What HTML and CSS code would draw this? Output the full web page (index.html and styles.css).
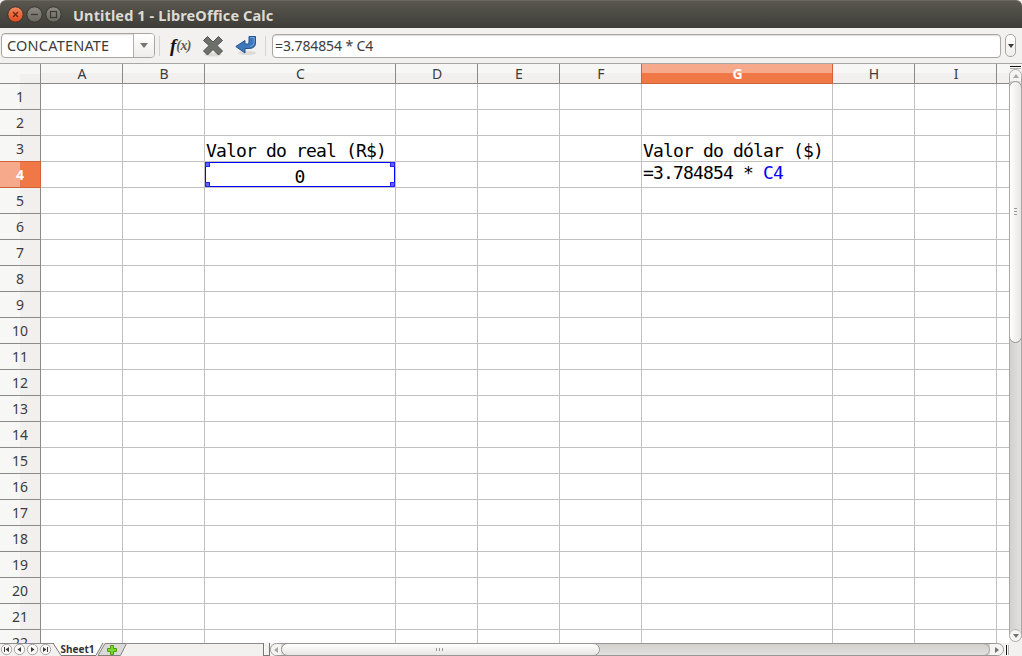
FILE: index.html
```html
<!DOCTYPE html>
<html lang="en">
<head>
<meta charset="utf-8">
<title>Untitled 1 - LibreOffice Calc</title>
<link rel="stylesheet" href="styles.css">
</head>
<body>
<div class="window">
  <header class="titlebar">
    <svg class="winbtns" width="60" height="28" viewBox="0 0 60 28">
      <defs><linearGradient id="o" x2="0" y2="1"><stop offset="0" stop-color="#f58860"/><stop offset="1" stop-color="#df4a1a"/></linearGradient>
      <linearGradient id="g" x2="0" y2="1"><stop offset="0" stop-color="#8d8b83"/><stop offset="1" stop-color="#67655e"/></linearGradient></defs>
      <g stroke="#34332e"><circle cx="10.500" cy="14.500" r="7.700" fill="url(#o)"/><circle cx="29.500" cy="14.500" r="7.700" fill="url(#g)"/><circle cx="48.500" cy="14.500" r="7.700" fill="url(#g)"/></g>
      <g fill="none" stroke="#3b3933" stroke-width="1.200"><path d="M8 12l5 5M13 12l-5 5" stroke="#6b210b"/><path d="M26 14.500h7"/><rect x="45.500" y="11.500" width="6" height="6"/></g>
    </svg>
    <span class="title">Untitled 1 - LibreOffice Calc</span>
  </header>
  <div class="toolbar">
    <div class="namebox"><span class="name">CONCATENATE</span><span class="drop"><svg width="8" height="5"><path d="M0 0h8L4 5z" fill="#77756f"/></svg></span></div>
    <i class="sep"></i>
    <div class="fx"><b>f</b><span>(x)</span></div>
    <svg class="cancel" width="22" height="22" viewBox="0 0 22 22"><ellipse cx="11" cy="19.500" rx="9" ry="2" fill="#dddbd8"/><path d="M5.500 1.500L11 7l5.500-5.500 4 4L15 10.500l5.500 5.500-4 4L11 14.500 5.500 20l-4-4L7 10.500 1.500 5.500z" fill="#6d6f6b" stroke="#50524e" stroke-linejoin="round"/></svg>
    <svg class="accept" width="22" height="22" viewBox="0 0 22 22"><ellipse cx="12" cy="18" rx="9" ry="2" fill="#dddbd8"/><path d="M14 1.500h6.500V8q0 5-6 5.500H10V18L.8 11.500 10 5.500V9h2.500q1.500 0 1.500-2z" fill="#3f77bb" stroke="#24528e" stroke-linejoin="round"/><path d="M15.200 2.500h4v5q0 3-4 4" fill="none" stroke="#7ba6d8"/></svg>
    <i class="sep sep2"></i>
    <div class="formula">=3.784854 * C4</div>
    <div class="expand"><svg width="6" height="4"><path d="M0 0h6L3 4z" fill="#3c3b37"/></svg></div>
  </div>
  <main class="main">
    <div class="sheet" id="sheet"></div>
    <div class="vscroll">
      <div class="split"></div>
      <div class="vtrack">
        <div class="vend"><svg width="6" height="4"><path d="M0 4h6L3 0z" fill="#aaa8a5"/></svg></div>
        <div class="vthumb"><i></i><i></i><i></i></div>
        <div class="vend vdown"><svg width="6" height="4"><path d="M0 0h6L3 4z" fill="#74726e"/></svg></div>
      </div>
    </div>
  </main>
  <footer class="bottom">
    <svg class="tabs" width="264" height="13" viewBox="0 0 264 13">
      <path d="M0 .5h54M127 .5h137" stroke="#8e8c89"/>
      <path d="M53 0L61 12.500H95L102 0z" fill="#fff"/>
      <path d="M53 0l8 12.500H96L103 0" fill="none" stroke="#777"/>
      <path d="M105 .5h21.500l-6 12H98z" fill="#dcdad7" stroke="#858381"/>
      <g fill="#faf9f8" stroke="#aaa8a5"><circle cx="6.500" cy="6.500" r="5.200"/><circle cx="19.500" cy="6.500" r="5.200"/><circle cx="32.500" cy="6.500" r="5.200"/><circle cx="45.500" cy="6.500" r="5.200"/></g>
      <g fill="#3c3b37"><path d="M4 4h1v5H4zM9 4v5L5.500 6.500zM21 4v5l-3.500-2.500zM31 4v5l3.500-2.500zM43 4v5l3.500-2.500zM47 4h1v5h-1z"/></g>
      <path d="M110.500 2.500h3v3h3v3h-3v3h-3v-3h-3v-3h3z" fill="#78d82c" stroke="#4a9e0c"/>
      <text class="tabtext" x="60.500" y="10" textLength="34" lengthAdjust="spacingAndGlyphs">Sheet1</text>
    </svg>
    <div class="hsplit"></div>
    <div class="htrack">
      <div class="hend"><svg width="4" height="6"><path d="M4 0v6L0 3z" fill="#aaa8a5"/></svg></div>
      <div class="hthumb"><i></i><i></i><i></i></div>
      <div class="hspace"></div>
      <div class="hend hright"><svg width="4" height="6"><path d="M0 0v6l4-3z" fill="#74726e"/></svg></div>
    </div>
    <div class="hmark"></div>
  </footer>
</div>
<script src="sheet.js"></script>
</body>
</html>
```
FILE: sheet.js
```js
const columns = ["A", "B", "C", "D", "E", "F", "G", "H", "I", ""];
const content = {
  C3: "Valor do real (R$)",
  C4: '<span class="ref"><i></i><i></i><i></i><i></i>0</span>',
  G3: "Valor do dólar ($)",
  G4: '<span class="edit">=3.784854 * <em>C4</em></span>'
};
let html = '<div class="corner"></div>';
for (const c of columns) html += `<div class="colhead${c === "G" ? " active" : ""}">${c}</div>`;
for (let r = 1; r <= 22; r++) {
  html += `<div class="rowhead${r === 4 ? " active" : ""}">${r}</div>`;
  for (const c of columns) html += `<div class="cell">${content[c + r] || ""}</div>`;
}
document.getElementById("sheet").innerHTML = html;
```
FILE: styles.css
```css
* { box-sizing: border-box; }
body { margin: 0; background: #f2f1f0; }
.window { width: 1022px; height: 656px; display: flex; flex-direction: column; overflow: hidden; font-family: "Noto Sans", "Open Sans", sans-serif; color: #3c3c3c; }
svg { display: block; flex: none; }
.titlebar { height: 28px; flex: none; display: flex; align-items: center; padding-left: 5px; border-radius: 6px 6px 0 0; background: linear-gradient(#59574f, #3e3d38); border-top: 1px solid #69675f; }
.winbtns { margin-top: -1px; }
.title { margin: 0 0 0 8px; color: #dfdbd2; font-weight: 700; font-size: 14.5px; letter-spacing: .12px; line-height: 20px; white-space: pre; }
.toolbar { height: 36px; flex: none; display: flex; align-items: center; border-bottom: 1px solid #a9a7a4; background: #f2f1f0; padding-left: 1px; }
.namebox { width: 154px; height: 25px; display: flex; border: 1px solid #aaa7a2; border-radius: 4px; background: #fff; box-shadow: inset 0 1px 1px #ddd; }
.name { width: 132px; padding-left: 5px; font-size: 14.5px; line-height: 23px; letter-spacing: .2px; border-right: 1px solid #b4b1ad; }
.drop { flex: 1; display: flex; align-items: center; justify-content: center; background: linear-gradient(#fff, #efedeb); border-radius: 0 3px 3px 0; }
.sep { width: 1px; height: 20px; background: #d5d3d0; margin-left: 4px; }
.fx { width: 24px; height: 24px; margin-left: 8px; display: flex; align-items: center; font-style: italic; font-family: "Liberation Serif", serif; color: #111; }
.fx b { font-size: 19px; line-height: 20px; padding-left: 2px; }
.fx span { font-size: 14px; font-weight: 700; color: #5d5a50; letter-spacing: -.6px; }
.cancel { margin-left: 10px; }
.accept { margin-left: 11px; }
.sep2 { margin-left: 8px; }
.formula { width: 729px; height: 24px; margin-left: 6px; border: 1px solid #aaa7a2; border-radius: 4px; background: #fff; box-shadow: inset 0 1px 1px #ddd; padding-left: 2px; font-size: 14px; line-height: 22px; letter-spacing: -.1px; }
.expand { width: 11px; height: 23px; margin-left: 4px; border: 1px solid #aaa7a2; border-radius: 5px; display: flex; align-items: center; justify-content: center; background: linear-gradient(#fff, #efedeb); }
.main { height: 579px; flex: none; display: flex; background: #fff; }
.sheet { width: 1009px; height: 579px; overflow: hidden; display: grid; grid-template-columns: 41px 82px 82px 191px 82px 82px 82px 191px 82px 82px 12px; grid-template-rows: 20px repeat(22, 26px); }
.corner, .colhead { border-right: 1px solid #8c8a88; border-bottom: 1px solid #8c8a88; background: linear-gradient(#f7f7f5 50%, #f1f0ee 50%); }
.corner { background: linear-gradient(#f1f0ee, #f1f0ee) 20px 10px no-repeat #f7f7f5; }
.colhead { text-align: center; font-size: 14px; line-height: 20px; padding-left: 1px; }
.colhead:nth-child(11) { border-right: 0; }
.rowhead { border-right: 1px solid #8c8a88; border-bottom: 1px solid #8c8a88; background: linear-gradient(90deg, #f7f7f5 20px, #f1f0ee 20px); text-align: center; font-size: 14px; line-height: 26px; }
.colhead.active { background: linear-gradient(#f7a98b 50%, #f07746 50%); color: #fff; font-weight: 700; border-color: #cf6237; box-shadow: -1px 0 #cf6237; }
.rowhead.active { background: linear-gradient(90deg, #f7a98b 20px, #f07746 20px); color: #fff; font-weight: 700; border-color: #cf6237; box-shadow: 0 -1px #cf6237; }
.cell { border-right: 1px solid #c0c0c0; border-bottom: 1px solid #c0c0c0; font: 18px/29px "DejaVu Sans Mono", monospace; letter-spacing: -.84px; color: #000; white-space: pre; padding-left: 1px; }
.cell:nth-child(11n) { border-right: 0; }
.ref { display: block; position: relative; width: 190px; height: 25px; margin-left: -1px; border: 1px solid #0000ff; text-align: center; line-height: 28px; padding-right: 1px; }
.ref i { position: absolute; width: 5px; height: 5px; background: #6262ff; border: 1px solid #2222ee; }
.ref i:nth-child(1) { left: -1px; top: -1px; }
.ref i:nth-child(2) { right: -1px; top: -1px; }
.ref i:nth-child(3) { left: -1px; bottom: -1px; }
.ref i:nth-child(4) { right: -1px; bottom: -1px; }
.edit { display: block; line-height: 22px; }
.edit em { font-style: normal; color: #0000ff; }
.vscroll { width: 13px; display: flex; flex-direction: column; background: #f2f1f0; }
.split { height: 5px; margin: 0 1px 0 1px; border-top: 1px solid #fff; border-bottom: 1px solid #b5b3b0; background: linear-gradient(#f2f1f0 1px, #111 1px, #111 2px, #fff 2px); }
.vtrack { height: 573px; border: 1px solid #aaa8a5; border-radius: 7px; background: linear-gradient(90deg, #d3d1ce, #e2e0de); display: flex; flex-direction: column; overflow: hidden; }
.vend { height: 11px; flex: none; background: #f5f4f3; display: flex; align-items: center; justify-content: center; }
.vthumb { height: 262px; margin: 0 -1px; padding-bottom: 2px; flex: none; border: 1px solid #999794; border-radius: 7px; background: linear-gradient(90deg, #fff, #e7e5e3); display: flex; flex-direction: column; align-items: center; justify-content: center; gap: 2px; }
.vthumb i { width: 3px; height: 1px; background: #9a9895; }
.vdown { margin-top: auto; border-top: 1px solid #b5b3b0; border-radius: 7px; height: 12px; }
.bottom { height: 13px; flex: none; display: flex; background: #f2f1f0; }
.tabs { margin-right: -1px; }
.tabtext { font: 700 10.500px "Noto Sans", sans-serif; fill: #333; }
.hsplit { width: 7px; border: 1px solid #777; border-width: 0 1px 1px; box-shadow: inset 1px 0 #fff; }
.htrack { width: 734px; height: 13px; border: 1px solid #999794; border-radius: 7px; display: flex; background: linear-gradient(#d3d1ce, #e2e0de); overflow: hidden; }
.hend { width: 10px; flex: none; background: #f5f4f3; display: flex; align-items: center; justify-content: center; }
.hthumb { width: 319px; flex: none; margin: -1px 0; padding-right: 2px; border: 1px solid #999794; border-radius: 7px; background: linear-gradient(#fff, #e7e5e3); display: flex; align-items: center; justify-content: center; gap: 2px; }
.hthumb i { width: 1px; height: 3px; background: #9a9895; }
.hspace { flex: 1; margin: -1px 0; border: 1px solid #aaa8a5; border-left: 0; border-radius: 0 7px 7px 0; }
.hright { width: 13px; }
.hmark { width: 4px; margin-left: 1px; height: 10px; margin-top: 2px; border-right: 1px solid #b5b3b0; background: linear-gradient(90deg, #fff 1px, #111 1px, #111 2px, #fff 2px); }
```
